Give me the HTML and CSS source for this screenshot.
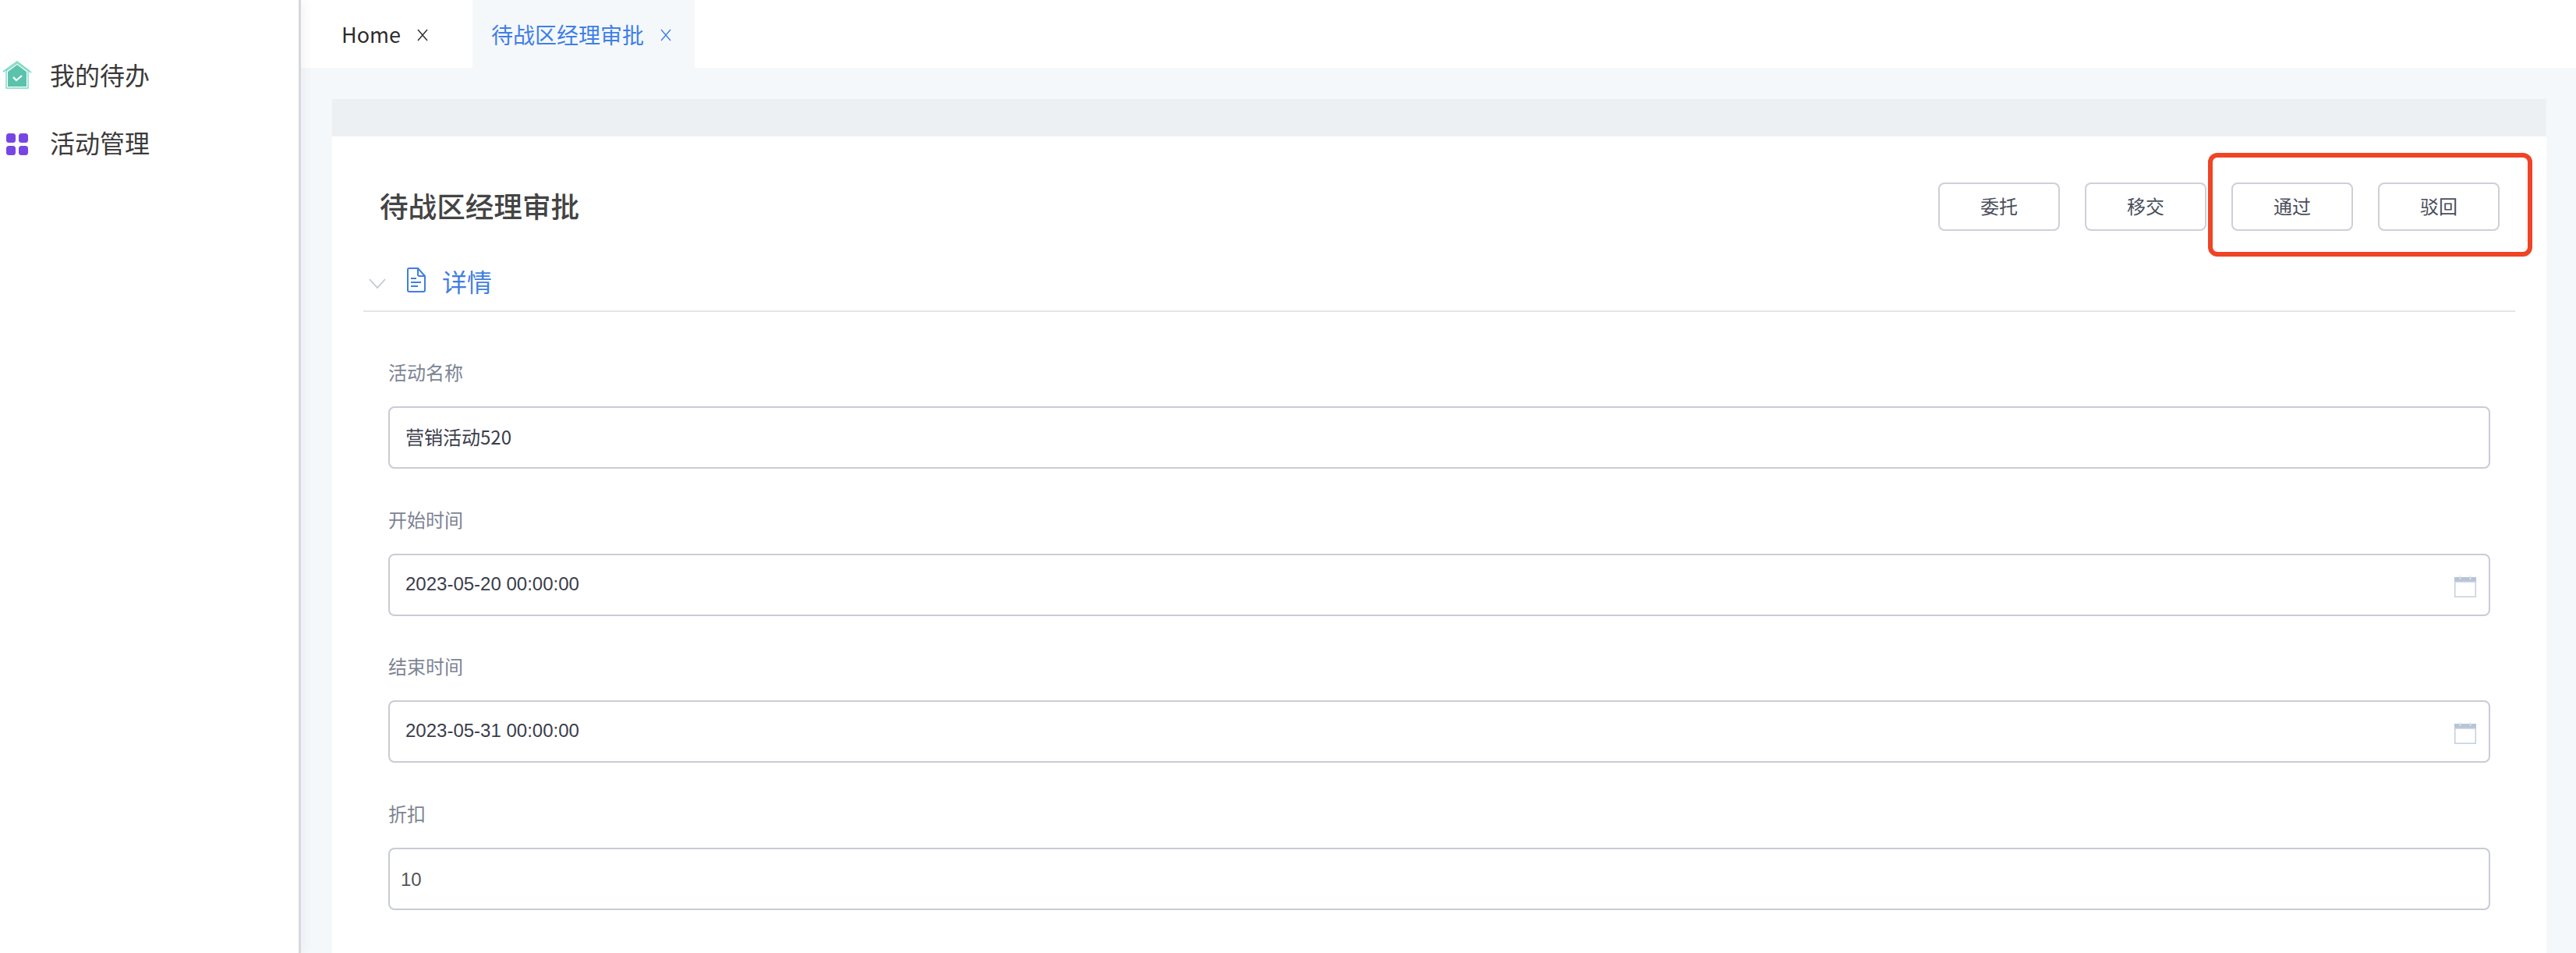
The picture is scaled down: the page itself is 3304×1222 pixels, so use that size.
FILE: index.html
```html
<!DOCTYPE html>
<html lang="zh-CN">
<head>
    <meta charset="UTF-8">
    <meta name="viewport" content="width=device-width, initial-scale=1.0">
    <title>待战区经理审批</title>
    <link rel="stylesheet" href="styles.css">
</head>
<body>

    <aside class="sidebar">
        <div class="menu-item menu-todo">
            <svg class="menu-icon" width="38" height="36" viewBox="0 0 38 36">
                <path d="M1 14 19 1l18 14" fill="none" stroke="#7ed8c6" stroke-width="1.6"/>
                <path d="M5 13 19 3l14 10v22H5z" fill="#fff" stroke="#7ed8c6" stroke-width="1.4"/>
                <path d="M7 14 19 5l12 9v19H7z" fill="#5bc3ac"/>
                <path d="m14 21 4 4 7-6" fill="none" stroke="#fff" stroke-width="2.2"/>
            </svg>
            <span>我的待办</span>
        </div>
        <div class="menu-item menu-activity">
            <svg class="menu-icon" width="38" height="30" viewBox="0 0 38 30">
                <rect x="5" y="1" width="12" height="12" rx="3.5" fill="#7646e4"/>
                <rect x="21" y="1" width="12" height="12" rx="3.5" fill="#7646e4"/>
                <rect x="5" y="17" width="12" height="12" rx="3.5" fill="#7646e4"/>
                <rect x="21" y="17" width="12" height="12" rx="3.5" fill="#7646e4"/>
            </svg>
            <span>活动管理</span>
        </div>
    </aside>

    <main class="main">
        <nav class="tabs">
            <div class="tab tab-home">
                <span>Home</span>
                <svg class="tab-close" width="16" height="16" viewBox="0 0 16 16"><path d="m2 1 12 14M14 1 2 15" fill="none" stroke="currentColor" stroke-width="1.4"/></svg>
            </div>
            <div class="tab tab-active">
                <span>待战区经理审批</span>
                <svg class="tab-close" width="16" height="16" viewBox="0 0 16 16"><path d="m2 1 12 14M14 1 2 15" fill="none" stroke="currentColor" stroke-width="1.4"/></svg>
            </div>
        </nav>

        <div class="content">
            <section class="card">
                <div class="card-bar"></div>

                <header class="card-head">
                    <h1 class="card-title">待战区经理审批</h1>
                    <div class="actions">
                        <button class="btn">委托</button>
                        <button class="btn">移交</button>
                        <button class="btn">通过</button>
                        <button class="btn">驳回</button>
                    </div>
                </header>

                <!-- red mark around the two approval buttons -->
                <div class="highlight"></div>

                <div class="section-head">
                    <svg class="chevron" width="22" height="14" viewBox="0 0 22 14"><path d="m1 1 10 11L21 1" fill="none" stroke="#bcc6d6" stroke-width="1.6"/></svg>
                    <svg class="doc-icon" width="24" height="32" viewBox="0 0 24 32">
                        <path d="M3 1h11l9 10v18a2 2 0 0 1-2 2H3a2 2 0 0 1-2-2V3a2 2 0 0 1 2-2z" fill="none" stroke="#3f7fe0" stroke-width="2"/>
                        <path d="M14 1v8a2 2 0 0 0 2 2h7" fill="none" stroke="#3f7fe0" stroke-width="2"/>
                        <path d="M5 14h7M5 19h13M5 24h9" fill="none" stroke="#3f7fe0" stroke-width="2"/>
                    </svg>
                    <span class="section-title">详情</span>
                </div>

                <form class="form">
                    <div class="field">
                        <label class="field-label">活动名称</label>
                        <div class="field-box"><span class="value-name">营销活动520</span></div>
                    </div>
                    <div class="field">
                        <label class="field-label">开始时间</label>
                        <div class="field-box">
                            <span class="value-date">2023-05-20 00:00:00</span>
                            <svg class="calendar" width="28" height="28" viewBox="0 0 28 28">
                                <path d="M0 2h28v7H0z" fill="#b8c4d6"/>
                                <path d="M.75 8h26.5v19.25H.75z" fill="#fff" stroke="#c5cfde" stroke-width="1.5"/>
                                <path d="M7.5 0v5M20.5 0v5" stroke="#dfe5ee" stroke-width="1.5"/>
                            </svg>
                        </div>
                    </div>
                    <div class="field">
                        <label class="field-label">结束时间</label>
                        <div class="field-box">
                            <span class="value-date">2023-05-31 00:00:00</span>
                            <svg class="calendar" width="28" height="28" viewBox="0 0 28 28">
                                <path d="M0 2h28v7H0z" fill="#b8c4d6"/>
                                <path d="M.75 8h26.5v19.25H.75z" fill="#fff" stroke="#c5cfde" stroke-width="1.5"/>
                                <path d="M7.5 0v5M20.5 0v5" stroke="#dfe5ee" stroke-width="1.5"/>
                            </svg>
                        </div>
                    </div>
                    <div class="field">
                        <label class="field-label">折扣</label>
                        <div class="field-box field-number"><span class="value-number">10</span></div>
                    </div>
                </form>
            </section>
        </div>
    </main>

</body>
</html>
```

FILE: styles.css
```css
/* General reset */
* {
    margin: 0;
    padding: 0;
    box-sizing: border-box;
    font-family: "Noto Sans CJK SC", "Noto Sans", sans-serif;
}

html, body {
    height: 100%;
    overflow: hidden;
}

body {
    display: flex;
    background-color: #f5f8fb;
}

/* Sidebar */
.sidebar {
    flex: 0 0 386px;
    background-color: #fff;
    border-right: 3px solid #d6d8db;
    box-shadow: 3px 0 14px rgba(0, 20, 40, 0.05);
    padding-top: 51px;
    z-index: 1;
}

.menu-item {
    display: flex;
    align-items: center;
    height: 87px;
    font-size: 32px;
    color: #3a3a3a;
}

.menu-icon {
    flex: none;
    margin-left: 3px;
    margin-right: 23px;
}

.menu-todo .menu-icon {
    margin-top: 2px;
}

.menu-activity .menu-icon {
    margin-top: 6px;
}

/* Tabs */
.main {
    flex: 1;
    min-width: 0;
    display: flex;
    flex-direction: column;
}

.tabs {
    display: flex;
    flex: 0 0 87px;
    background-color: #fff;
}

.tab {
    display: flex;
    align-items: center;
    gap: 20px;
    font-size: 28px;
    color: #2c2c2c;
}

.tab-home {
    padding: 0 56px 0 52px;
    font-size: 27px;
}

.tab-active {
    padding: 0 29px 0 24px;
    background-color: #f5f8fb;
    color: #3f7fe8;
}

.tab-close {
    margin-top: 3px;
}

/* Card */
.content {
    flex: 1;
    min-height: 0;
    padding: 40px 38px 0 40px;
}

.card {
    position: relative;
    height: 100%;
    background-color: #fff;
}

.card-bar {
    height: 48px;
    background-color: #edf0f3;
}

.card-head {
    display: flex;
    justify-content: space-between;
    align-items: center;
    padding: 59px 60px 0 61px;
}

.card-title {
    margin-top: -4px;
    font-size: 36.6px;
    font-weight: 500;
    color: #444;
}

.actions {
    display: flex;
    gap: 32px;
}

.btn {
    width: 156px;
    height: 62px;
    padding-bottom: 4px;
    background-color: #fff;
    border: 2px solid #cdd0d8;
    border-radius: 8px;
    font-size: 24px;
    color: #4a4e5c;
}

.highlight {
    position: absolute;
    top: 21px;
    right: 18px;
    width: 416px;
    height: 133px;
    margin-top: 48px;
    border: 6px solid #ef4425;
    border-radius: 12px;
}

/* Section heading */
.section-head {
    display: flex;
    align-items: center;
    height: 70px;
    margin: 34px 40px 0;
    border-bottom: 2px solid #e4e5e7;
    padding: 0 0 4px 7px;
    color: #3f7fe0;
}

.chevron {
    margin-top: 3px;
}

.doc-icon {
    margin-left: 27px;
    margin-top: -7px;
}

.section-title {
    margin-left: 21px;
    margin-top: -4px;
    font-size: 32px;
}

/* Form */
.form {
    padding: 61px 72px 0;
}

.field {
    margin-bottom: 48.67px;
}

.field-label {
    display: block;
    height: 36px;
    line-height: 32px;
    margin-bottom: 24px;
    font-size: 24px;
    color: #7d8494;
}

.field-box {
    display: flex;
    justify-content: space-between;
    align-items: center;
    height: 80px;
    padding: 0 16px 0 20px;
    background-color: #fff;
    border: 2px solid #c9ccd5;
    border-radius: 8px;
    font-size: 24px;
}

.field-number {
    padding-left: 14px;
}

.value-name {
    margin-top: -4px;
    color: #3a3d4b;
}

.value-date {
    margin-top: -2px;
    font-family: "Liberation Sans", sans-serif;
    color: #3a3d4b;
}

.value-number {
    margin-top: 2px;
    font-family: "Liberation Sans", sans-serif;
    color: #555;
}

.calendar {
    margin-top: 4px;
}
```
